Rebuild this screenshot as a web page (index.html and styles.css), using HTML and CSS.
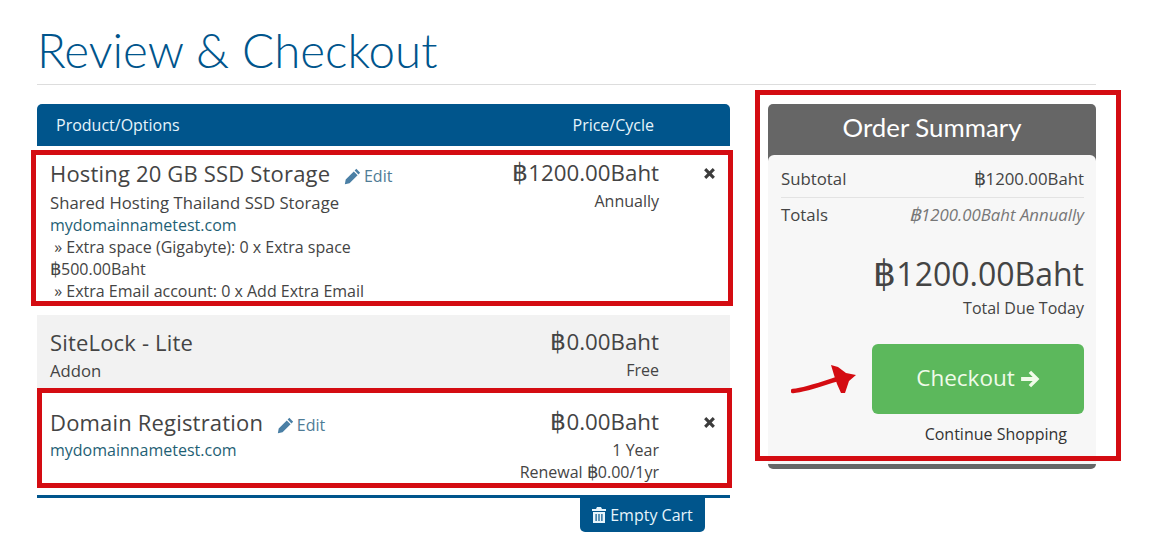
FILE: index.html
```html
<!DOCTYPE html>
<html lang="en">
<head>
<meta charset="utf-8">
<title>Review &amp; Checkout</title>
<link rel="stylesheet" href="styles.css">
</head>
<body>
<main class="page">
  <h1 class="title">Review &amp; Checkout</h1>
  <div class="columns">
    <section class="cart">
      <div class="cart-head"><span>Product/Options</span><span class="head-price">Price/Cycle</span></div>

      <div class="row row-hosting marked marked-hosting">
        <div class="info">
          <div class="name-line"><span class="name">Hosting 20 GB SSD Storage</span>
            <a class="edit"><svg class="pencil" viewBox="0 0 16 16"><path d="M11.600 0.800 15.200 4.400 13.600 6 10 2.400zM9.200 3.200 12.800 6.800 5.200 14.400 0.800 15.200 1.600 10.800z"/></svg>Edit</a></div>
          <div class="desc">Shared Hosting Thailand SSD Storage</div>
          <div class="domain">mydomainnametest.com</div>
          <div class="opt">&nbsp;» Extra space (Gigabyte): 0 x Extra space</div>
          <div class="opt"><span class="b">฿</span>500.00Baht</div>
          <div class="opt">&nbsp;» Extra Email account: 0 x Add Extra Email</div>
        </div>
        <div class="price"><div class="amount"><span class="b">฿</span>1200.00Baht</div><div>Annually</div></div>
        <div class="remove"><svg class="x" viewBox="0 0 12 12"><path d="M1 3 3 1 6 4 9 1 11 3 8 6 11 9 9 11 6 8 3 11 1 9 4 6z"/></svg></div>
      </div>

      <div class="row row-addon">
        <div class="info">
          <div class="name-line"><span class="name">SiteLock - Lite</span></div>
          <div class="desc">Addon</div>
        </div>
        <div class="price"><div class="amount"><span class="b">฿</span>0.00Baht</div><div>Free</div></div>
        <div class="remove"></div>
      </div>

      <div class="row row-domain marked marked-domain">
        <div class="info">
          <div class="name-line"><span class="name">Domain Registration</span>
            <a class="edit"><svg class="pencil" viewBox="0 0 16 16"><path d="M11.600 0.800 15.200 4.400 13.600 6 10 2.400zM9.200 3.200 12.800 6.800 5.200 14.400 0.800 15.200 1.600 10.800z"/></svg>Edit</a></div>
          <div class="domain">mydomainnametest.com</div>
        </div>
        <div class="price"><div class="amount"><span class="b">฿</span>0.00Baht</div><div>1 Year</div><div>Renewal <span class="b">฿</span>0.00/1yr</div></div>
        <div class="remove"><svg class="x" viewBox="0 0 12 12"><path d="M1 3 3 1 6 4 9 1 11 3 8 6 11 9 9 11 6 8 3 11 1 9 4 6z"/></svg></div>
      </div>

      <div class="cart-foot">
        <a class="empty"><svg class="trash" viewBox="0 0 14 16"><path d="M5 0h4l1 2h4v2H0V2h4zM1 5h12v11H1zM3.500 7v7h1.200V7zM6.400 7v7h1.200V7zM9.300 7v7h1.200V7z" fill-rule="evenodd"/></svg>Empty Cart</a>
      </div>
    </section>

    <aside class="summary marked-summary">
      <h2 class="summary-head">Order Summary</h2>
      <div class="summary-body">
        <div class="line line-sub"><span>Subtotal</span><span><span class="b">฿</span>1200.00Baht</span></div>
        <div class="line line-total"><span>Totals</span><em><span class="b">฿</span>1200.00Baht Annually</em></div>
        <div class="due"><span class="b">฿</span>1200.00Baht</div>
        <div class="due-label">Total Due Today</div>
        <a class="checkout">Checkout<svg class="go" viewBox="0 0 18 16"><path d="M10 0.500 17.500 8 10 15.500 7.800 13.300 11.400 9.800H1V6.200H11.400L7.800 2.700z"/></svg>
          <svg class="scribble" viewBox="0 0 66 30"><path class="scribble-line" d="M2 27C14 26 28 21 46 15"/><path class="scribble-head" d="M40 1 47 3 55 9 65 11 58 17 54 29 50 29 46 20 43 11z"/></svg>
        </a>
        <a class="continue">Continue Shopping</a>
      </div>
    </aside>
  </div>
</main>
</body>
</html>
```

FILE: styles.css
```css
* { box-sizing: border-box; }
html, body { margin: 0; padding: 0; background: #fff; }
body {
  font-family: "Open Sans", "DejaVu Sans", "Noto Sans", sans-serif;
  font-size: 16px;
  line-height: 22px;
  color: #444;
  width: 1149px;
  height: 554px;
  overflow: hidden;
}
.b { font-family: "Liberation Sans", sans-serif; font-size: 1.12em; line-height: 1; }
.page { padding: 0 53px 0 37px; }
.title {
  margin: 0;
  height: 85px;
  padding-top: 22px;
  font-family: Lato, "Open Sans", sans-serif;
  font-weight: 300;
  font-size: 47.5px;
  line-height: 56px;
  color: #00558c;
  border-bottom: 1px solid #ddd;
}
.columns { display: flex; justify-content: space-between; align-items: flex-start; padding-top: 19px; }
.cart { width: 693px; }
.cart-head {
  display: flex;
  height: 42px;
  align-items: center;
  padding-left: 19px;
  background: #00558c;
  color: #e6f4fb;
  border-radius: 5px 5px 0 0;
  font-size: 16px;
  font-weight: 400;
}
.head-price { margin-left: auto; margin-right: 76px; }
.row { display: flex; padding: 12px 0 0 13px; position: relative; }
.row-hosting { height: 152px; margin-top: 6px; margin-bottom: 11px; padding-top: 5px; }
.row-hosting .name-line { margin-bottom: 3px; }
.row-addon { height: 73px; background: #f2f2f2; padding-top: 11px; }
.row-addon .name-line { margin-bottom: 2px; }
.row-domain { height: 107px; padding-top: 18px; }
.row-domain .name-line { margin-bottom: 1px; }
.info { flex: 1 1 0; min-width: 0; white-space: nowrap; }
.name-line { height: 32px; font-size: 22px; line-height: 32px; color: #444; }
.name { margin-right: 8px; letter-spacing: 0.18px; }
.edit { font-size: 16px; color: #4f7c96; }
.pencil { width: 17px; height: 17px; fill: #4a7fa5; vertical-align: -3px; margin-right: 3px; }
.desc { font-size: 16.7px; }
.domain { color: #1f5f75; }
.opt { font-size: 16px; }
.price { text-align: right; width: 300px; }
.amount { height: 33px; font-size: 22.3px; line-height: 32px; }
.remove { width: 71px; display: flex; justify-content: flex-end; padding: 10px 14px 0 0; }
.x { width: 13px; height: 13px; fill: #3c3c3c; }
.marked::after,
.marked-summary::after {
  content: "";
  position: absolute;
  border: 5px solid #d40c12;
  pointer-events: none;
}
.marked-hosting::after { left: -6px; right: -3px; top: -2px; bottom: -2px; }
.marked-domain::after { left: 0; right: -2px; top: 0; bottom: 7px; }
.cart-foot {
  border-top: 3px solid #00558c;
  display: flex;
  justify-content: flex-end;
  padding-right: 25px;
}
.empty {
  display: flex;
  align-items: center;
  gap: 4px;
  width: 125px;
  height: 34px;
  justify-content: center;
  background: #00558c;
  color: #e6f4fb;
  font-size: 16px;
  border-radius: 0 0 5px 5px;
}
.trash { width: 14px; height: 16px; fill: #e6f4fb; }
.summary { width: 328px; position: relative; background: #666; border-radius: 5px; padding-bottom: 5px; margin-top: 0; }
.marked-summary::after { left: -13px; right: -25px; top: -14px; bottom: 8px; }
.summary-head {
  margin: 0;
  height: 51px;
  text-align: center;
  font-family: Lato, "Open Sans", sans-serif;
  font-weight: 400;
  font-size: 25.8px;
  line-height: 47px;
  color: #fff;
}
.summary-body { background: #f7f7f7; border-radius: 6px 6px 0 0; padding: 13px 12px 0 13px; height: 309px; }
.line { display: flex; justify-content: space-between; font-size: 16.8px; }
.line-sub { height: 30px; border-bottom: 1px solid #e3e3e3; }
.line-total { padding-top: 6px; }
.line-total em { color: #777; }
.due { margin-top: 28px; text-align: right; font-size: 32px; line-height: 40px; }
.due-label { text-align: right; margin-top: 3px; }
.checkout {
  display: flex;
  position: relative;
  align-items: center;
  justify-content: center;
  gap: 5px;
  margin: 25px 0 0 91px;
  height: 70px;
  padding-bottom: 3px;
  background: #5cb85c;
  color: #f0fbe9;
  font-size: 22.5px;
  border-radius: 6px;
}
.go { width: 20px; height: 18px; fill: #f0fbe9; margin-top: 3px; }
.scribble { position: absolute; left: -81px; top: 20px; width: 66px; height: 30px; }
.scribble-line { fill: none; stroke: #d40c12; stroke-width: 4.5px; stroke-linecap: round; }
.scribble-head { fill: #d40c12; }
.continue { display: block; text-align: right; padding: 9px 17px 0 0; color: #333; }
```
